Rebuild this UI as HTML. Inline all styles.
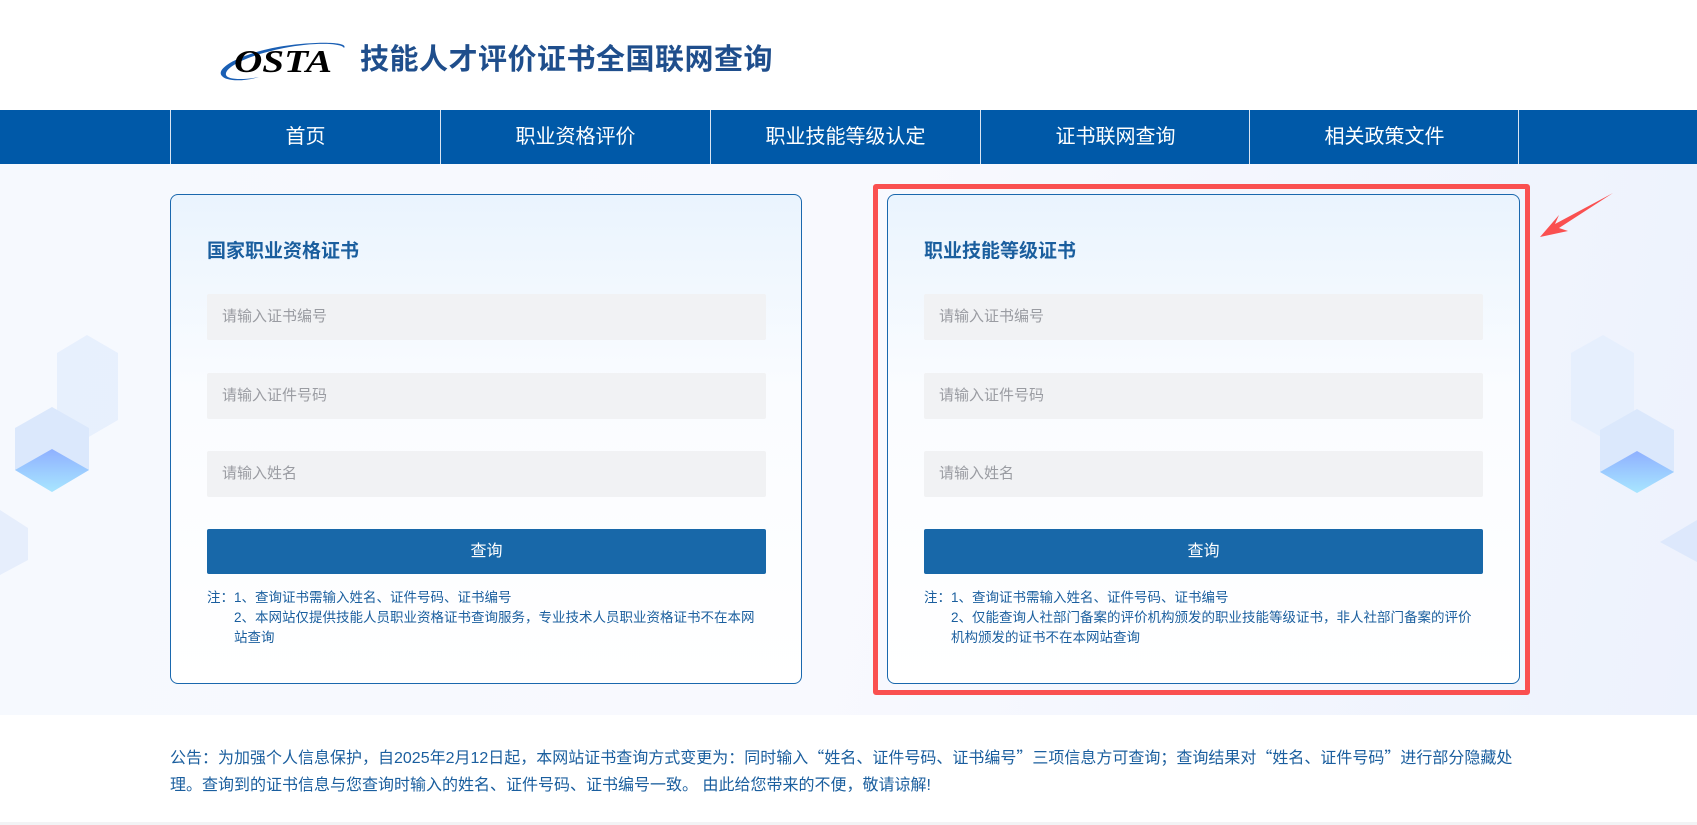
<!DOCTYPE html>
<html><head><meta charset="utf-8"><style>
*{margin:0;padding:0;box-sizing:border-box}
body{width:1697px;height:825px;overflow:hidden;background:#fff;font-family:"Liberation Sans","Noto Sans CJK SC",sans-serif;position:relative}
.abs{position:absolute}
.cjk{font-family:"Noto Sans CJK SC",sans-serif}
.title{left:360px;top:36px;font-size:29px;font-weight:bold;color:#1f4e8c;letter-spacing:0.5px;white-space:nowrap}
.nav{left:0;top:110px;width:1697px;height:54px;background:#0059a8}
.nav div{position:absolute;top:0;height:54px;width:270px;border-left:1px solid #d8e4f2;color:#fff;font-size:20px;text-align:center;line-height:54px}
.main{left:0;top:164px;width:1697px;height:551px;background:linear-gradient(100deg,#f6f9fe 0%,#f8f9fe 50%,#edf2fd 100%)}
.card{position:absolute;top:194px;height:490px;border:1px solid #1a68ae;border-radius:8px;background:linear-gradient(180deg,#eaf4fe 0%,#fafcff 40%,#fff 100%)}
.card h3{position:absolute;left:36px;top:41px;font-size:19px;color:#1a5e9e;font-weight:bold}
.inp{position:absolute;left:36px;height:46px;background:#f1f2f4;border-radius:2px;color:#9a9ca2;font-size:15px;line-height:46px;padding-left:15px}
.btn{position:absolute;left:36px;top:334px;height:45px;background:#1868a9;border-radius:2px;color:#fff;font-size:16px;text-align:center;line-height:45px}
.note{position:absolute;left:36px;top:393px;font-size:13.5px;color:#1a5e9e;line-height:20px}
.note p{padding-left:27px}
.ann{left:170px;top:743px;font-size:16px;color:#1a5e9e;line-height:27px;white-space:nowrap}
</style></head><body>
<svg class="abs" style="left:214px;top:34px" width="140" height="50" viewBox="0 0 140 50">
<path d="M8 42 C0 34 30 18 70 12 C105 7 135 8 130 14 C128 9 100 8 70 14 C35 21 10 33 12 41 C14 46 30 46 45 43 C28 48 12 47 8 42Z" fill="#1a5fb4"/>
<text x="20" y="38" font-family="Liberation Serif,serif" font-style="italic" font-weight="bold" font-size="32" fill="#000" textLength="98" lengthAdjust="spacingAndGlyphs">OSTA</text>
</svg>
<div class="abs title">技能人才评价证书全国联网查询</div>
<div class="abs nav">
<div style="left:170px">首页</div><div style="left:440px">职业资格评价</div><div style="left:710px">职业技能等级认定</div><div style="left:980px">证书联网查询</div><div style="left:1249px">相关政策文件</div><div style="left:1518px;width:1px"></div>
</div>
<div class="abs main"></div>
<svg class="abs" style="left:0;top:330px" width="130" height="260">
<defs><linearGradient id="g1" x1="0" y1="0" x2="0" y2="1"><stop offset="0" stop-color="#8fb0ff"/><stop offset="1" stop-color="#a8e6ff"/></linearGradient></defs>
<polygon points="87,5 118,23 118,90 87,108 57,90 57,23" fill="#e4eefc" opacity=".8"/>
<polygon points="52,77 89,98 89,140 52,162 15,140 15,98" fill="#dbe8fc"/>
<polygon points="52,119 89,140 52,162 15,140" fill="url(#g1)"/>
<polygon points="0,180 28,198 28,230 0,245" fill="#e6eefc"/>
</svg>
<svg class="abs" style="left:1560px;top:330px" width="137" height="260">
<polygon points="43,5 74,23 74,90 43,108 11,90 11,23" fill="#e4eefc" opacity=".8"/>
<polygon points="77,79 114,100 114,142 77,163 40,142 40,100" fill="#dbe8fc"/>
<polygon points="77,121 114,142 77,163 40,142" fill="url(#g1)"/>
<polygon points="137,190 100,212 137,232" fill="#dde8fc"/>
</svg>
<div class="card" style="left:170px;width:632px">
<h3>国家职业资格证书</h3>
<div class="inp" style="top:99px;width:559px">请输入证书编号</div>
<div class="inp" style="top:178px;width:559px">请输入证件号码</div>
<div class="inp" style="top:256px;width:559px">请输入姓名</div>
<div class="btn" style="width:559px">查询</div>
<div class="note" style="width:562px">注：1、查询证书需输入姓名、证件号码、证书编号<p>2、本网站仅提供技能人员职业资格证书查询服务，专业技术人员职业资格证书不在本网<br>站查询</p></div>
</div>
<div class="abs" style="left:873px;top:184px;width:657px;height:511px;border:5px solid #fa5050;border-radius:3px"></div>
<div class="card" style="left:887px;width:633px">
<h3>职业技能等级证书</h3>
<div class="inp" style="top:99px;width:559px">请输入证书编号</div>
<div class="inp" style="top:178px;width:559px">请输入证件号码</div>
<div class="inp" style="top:256px;width:559px">请输入姓名</div>
<div class="btn" style="width:559px">查询</div>
<div class="note" style="width:590px">注：1、查询证书需输入姓名、证件号码、证书编号<p>2、仅能查询人社部门备案的评价机构颁发的职业技能等级证书，非人社部门备案的评价<br>机构颁发的证书不在本网站查询</p></div>
</div>
<svg class="abs" style="left:1535px;top:188px" width="85" height="55"><path d="M78 5 L20 36 L24 27 L5 49 L33 43 L24 40 Z" fill="#fa5050"/></svg>
<div class="abs ann">公告：为加强个人信息保护，自2025年2月12日起，本网站证书查询方式变更为：同时输入<span class="cjk">“</span>姓名、证件号码、证书编号<span class="cjk">”</span>三项信息方可查询；查询结果对<span class="cjk">“</span>姓名、证件号码<span class="cjk">”</span>进行部分隐藏处<br>理。查询到的证书信息与您查询时输入的姓名、证件号码、证书编号一致。 由此给您带来的不便，敬请谅解!</div>
<div class="abs" style="left:0;top:822px;width:1697px;height:3px;background:#f2f3f5"></div>
</body></html>
